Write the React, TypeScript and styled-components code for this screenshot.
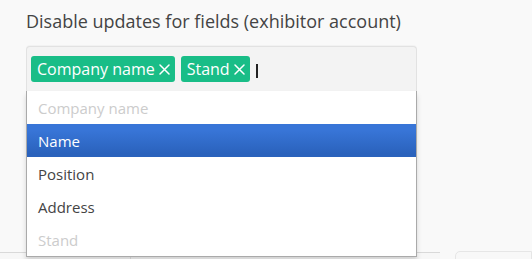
import React from "react";
import styled, { createGlobalStyle } from "styled-components";

const GlobalStyle = createGlobalStyle`
  html, body {
    margin: 0;
    padding: 0;
    background: #f9f9f9;
    font-family: "Open Sans", "Noto Sans", sans-serif;
    overflow: hidden;
  }
`;

const Page = styled.div`
  width: 532px;
  height: 259px;
  overflow: hidden;
  padding-top: 9px;
  box-sizing: border-box;
`;

const FieldGroup = styled.div`
  padding-left: 26px;
`;

const Label = styled.div`
  font-size: 18px;
  line-height: 24px;
  color: #444;
  margin-bottom: 13px;
`;

const Select = styled.div`
  position: relative;
  width: 391px;
  z-index: 2;
`;

const Choices = styled.div`
  box-sizing: border-box;
  height: 45px;
  display: flex;
  align-items: center;
  gap: 6px;
  padding: 0 4px;
  background: #f3f3f3;
  border: 1px solid #e2e2e2;
  border-bottom: 0;
  border-radius: 4px 4px 0 0;
  box-shadow: 0 -1px 1px rgba(0, 0, 0, 0.03);
`;

const Tag = styled.span`
  display: inline-flex;
  align-items: center;
  gap: 4px;
  height: 26px;
  padding: 0 5px 0 6px;
  background: #19bd87;
  color: #fff;
  font-size: 16px;
  border-radius: 3px;
`;

const Caret = styled.span`
  display: inline-block;
  width: 2px;
  height: 14px;
  margin-top: 3px;
  background: #222;
`;

const Drop = styled.ul`
  position: absolute;
  top: 100%;
  left: 0;
  right: 0;
  margin: 0;
  padding: 0;
  list-style: none;
  background: #fff;
  border: 1px solid #aaa;
  border-top: 0;
  box-shadow: 0 4px 5px rgba(0, 0, 0, 0.15);
`;

const Option = styled.li<{ $active?: boolean; $disabled?: boolean }>`
  height: 33px;
  display: flex;
  align-items: center;
  padding-left: 11px;
  font-size: 15px;
  color: ${(p) => (p.$active ? "#fff" : p.$disabled ? "#ccc" : "#444")};
  background: ${(p) =>
    p.$active ? "linear-gradient(#3875d7 20%, #2a62bc 90%)" : "transparent"};
`;

const Behind = styled.div`
  margin-top: 161px;
  display: flex;
  align-items: flex-start;
`;

const TableRow = styled.div`
  width: 440px;
  height: 20px;
  display: flex;
  border-top: 1px solid #d9d9d9;
  background: #f7f7f7;
`;

const Cell = styled.div<{ $width?: number }>`
  width: ${(p) => (p.$width ? `${p.$width}px` : "auto")};
  flex: ${(p) => (p.$width ? "none" : "1")};
  border-right: ${(p) => (p.$width ? "1px solid #e2e2e2" : "0")};
  font-size: 15px;
  color: #333;
  padding: 1px 0 0 100px;
  box-sizing: border-box;
`;

const Card = styled.div`
  margin-left: 15px;
  margin-top: -1px;
  flex: 1;
  height: 20px;
  border: 1px solid #e6e6e6;
  border-radius: 5px 0 0 0;
  background: #f8f8f8;
`;

const RemoveIcon = () => (
  <svg width="11" height="11" viewBox="0 0 11 11" aria-hidden>
    <path
      d="M1 1 L10 10 M10 1 L1 10"
      stroke="#fff"
      strokeWidth="1.5"
      strokeLinecap="round"
    />
  </svg>
);

const options = [
  { label: "Company name", disabled: true },
  { label: "Name", active: true },
  { label: "Position" },
  { label: "Address" },
  { label: "Stand", disabled: true },
];

export default function App() {
  return (
    <Page>
      <GlobalStyle />
      <FieldGroup>
        <Label>Disable updates for fields (exhibitor account)</Label>
        <Select>
          <Choices>
            <Tag>
              Company name
              <RemoveIcon />
            </Tag>
            <Tag>
              Stand
              <RemoveIcon />
            </Tag>
            <Caret />
          </Choices>
          <Drop>
            {options.map((o) => (
              <Option key={o.label} $active={o.active} $disabled={o.disabled}>
                {o.label}
              </Option>
            ))}
          </Drop>
        </Select>
      </FieldGroup>
      <Behind>
        <TableRow>
          <Cell $width={131} />
          <Cell>Marked as hidden</Cell>
        </TableRow>
        <Card />
      </Behind>
    </Page>
  );
}
